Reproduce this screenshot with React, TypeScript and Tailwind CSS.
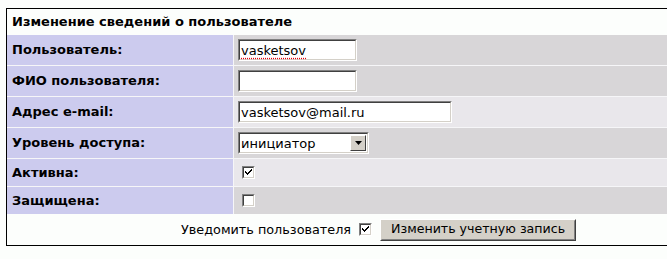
import React from "react";

const FONT = { fontFamily: '"DejaVu Sans", Verdana, sans-serif' };

function Sunken({ className, children }: { className?: string; children?: React.ReactNode }) {
  return (
    <div className={"border border-t-[#808080] border-l-[#808080] border-b-white border-r-white " + (className ?? "")}>
      <div className="h-full w-full border border-t-[#404040] border-l-[#404040] border-b-[#d4d0c8] border-r-[#d4d0c8] bg-white flex items-center">
        {children}
      </div>
    </div>
  );
}

function TextBox({ value, width, spell }: { value: string; width: string; spell?: boolean }) {
  return (
    <Sunken className={width + " h-[22px]"}>
      <span
        className={
          "pl-[1px] text-[13px] leading-none text-black whitespace-nowrap " +
          (spell ? "underline decoration-dotted decoration-red-600 underline-offset-[3px]" : "")
        }
      >
        {value}
      </span>
    </Sunken>
  );
}

function CheckBox({ checked }: { checked?: boolean }) {
  return (
    <Sunken className="w-[13px] h-[13px]">
      {checked && (
        <svg width="9" height="9" viewBox="0 0 9 9" className="block">
          <path d="M1 3h1v1h1v1h1V4h1V3h1V2h1V1h1v2H7v1H6v1H5v1H4v1H3V6H2V5H1z" fill="#000" />
        </svg>
      )}
    </Sunken>
  );
}

function Select({ value }: { value: string }) {
  return (
    <Sunken className="w-[131px] h-[22px]">
      <div className="flex-1 pl-[1px] text-[13px] leading-none text-black">{value}</div>
      <div className="w-[16px] h-[16px] mr-[1px] bg-[#d4d0c8] border border-t-white border-l-white border-b-[#404040] border-r-[#404040] flex items-center justify-center">
        <svg width="7" height="4" viewBox="0 0 7 4">
          <path d="M0 0h7L3.5 4z" fill="#000" />
        </svg>
      </div>
    </Sunken>
  );
}

type Row = { label: string; h: string; bg: string; content: React.ReactNode };

export default function App() {
  const rows: Row[] = [
    { label: "Пользователь:", h: "h-[30px]", bg: "bg-[#d8d6d8]", content: <TextBox value="vasketsov" width="w-[119px]" spell /> },
    { label: "ФИО пользователя:", h: "h-[30px]", bg: "bg-[#d8d6d8]", content: <TextBox value="" width="w-[119px]" /> },
    { label: "Адрес e-mail:", h: "h-[30px]", bg: "bg-[#e9e7eb]", content: <TextBox value="vasketsov@mail.ru" width="w-[214px]" /> },
    { label: "Уровень доступа:", h: "h-[30px]", bg: "bg-[#d8d6d8]", content: <Select value="инициатор" /> },
    { label: "Активна:", h: "h-[27px]", bg: "bg-[#e9e7eb]", content: <div className="pl-[4px]"><CheckBox checked /></div> },
    { label: "Защищена:", h: "h-[27px]", bg: "bg-[#d8d6d8]", content: <div className="pl-[4px]"><CheckBox /></div> },
  ];
  return (
    <div className="w-[667px] h-[259px] overflow-hidden bg-[#fcfefc] pt-[8px] pl-[6px]" style={FONT}>
      <div className="w-[680px] border-t border-l border-b border-black bg-[#fcfefc]">
        <div className="h-[26px] flex items-center pl-[5px] text-[13px] font-bold text-black whitespace-nowrap">
          Изменение сведений о пользователе
        </div>
        <div className="grid grid-cols-[226px_1fr] gap-px bg-[#f6f6f8]">
          {rows.map((r) => (
            <React.Fragment key={r.label}>
              <div className={r.h + " bg-[#cccbee] flex items-center pl-[5px] text-[13px] font-bold text-black whitespace-nowrap"}>
                {r.label}
              </div>
              <div className={r.h + " " + r.bg + " flex items-center pl-[4px]"}>{r.content}</div>
            </React.Fragment>
          ))}
        </div>
        <div className="h-[31px] flex items-center pl-[174px]">
          <span className="text-[12.8px] text-black mr-[8px] whitespace-nowrap">Уведомить пользователя</span>
          <CheckBox checked />
          <div className="ml-[8px] w-[196px] h-[22px] bg-[#d4d0c8] border border-t-white border-l-white border-b-[#404040] border-r-[#404040]">
            <div className="h-full w-full border border-t-[#d4d0c8] border-l-[#d4d0c8] border-b-[#808080] border-r-[#808080] flex items-center justify-center text-[12.6px] text-black whitespace-nowrap">
              Изменить учетную запись
            </div>
          </div>
        </div>
      </div>
    </div>
  );
}
